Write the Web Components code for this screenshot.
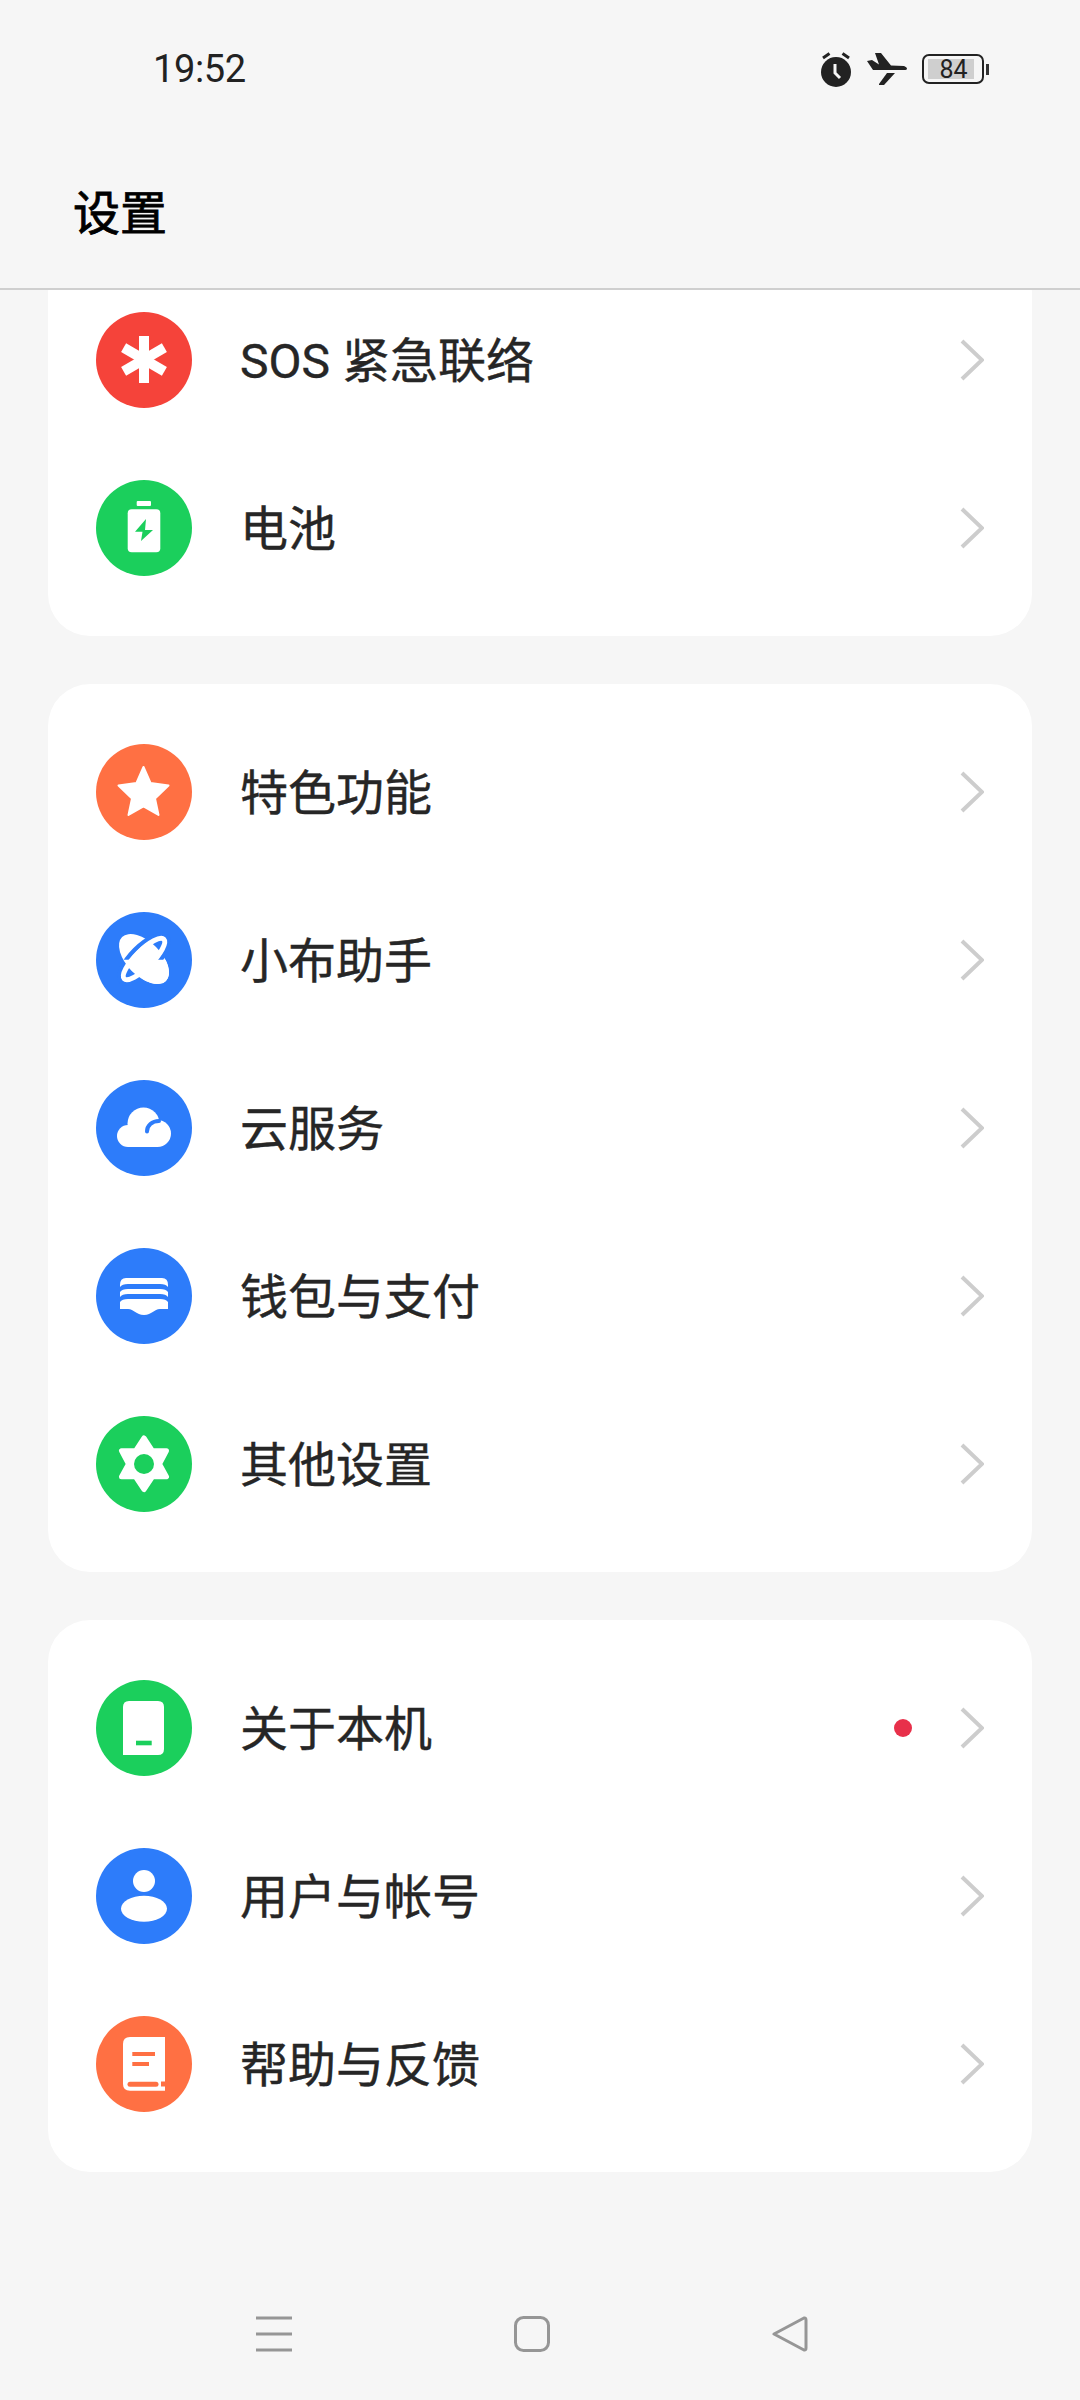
<!DOCTYPE html>
<html lang="zh">
<head>
<meta charset="utf-8">
<title>设置</title>
<style>
  html, body { margin: 0; padding: 0; background: #f6f6f6; }
  svg { display: block; }
</style>
</head>
<body>
<settings-app>
  <status-bar time="19:52" battery="84"></status-bar>
  <title-bar>设置</title-bar>
  <settings-list>
    <settings-group>
      <settings-row label="SOS 紧急联络" color="#f5433a">
        <svg slot="icon" viewBox="0 0 96 96" width="96" height="96">
          <g stroke="#fff" stroke-width="10" fill="none">
            <path d="M48 24V71"/>
            <path d="M27.6 35.7L68.4 59.3"/>
            <path d="M68.4 35.7L27.6 59.3"/>
          </g>
        </svg>
      </settings-row>
      <settings-row label="电池" color="#1bcf5c">
        <svg slot="icon" viewBox="0 0 96 96" width="96" height="96">
          <rect x="40.7" y="21" width="14.3" height="5" rx="1" fill="#fff"/>
          <rect x="31.7" y="29.3" width="32.6" height="43" rx="4" fill="#fff"/>
          <path d="M50 39L39 51.7H46.5L45 61L57 50H49Z" fill="#1bcf5c"/>
        </svg>
      </settings-row>
    </settings-group>
    <settings-group>
      <settings-row label="特色功能" color="#ff7043">
        <svg slot="icon" viewBox="0 0 96 96" width="96" height="96">
          <path d="M47.5 23L54.5 39L72.5 41.5L59 54.5L62.5 71L47.5 62.5L32.5 71L36 54.5L22.5 41.5L40.5 39Z" fill="#fff" stroke="#fff" stroke-width="2" stroke-linejoin="round"/>
        </svg>
      </settings-row>
      <settings-row label="小布助手" color="#2d7cfa">
        <svg slot="icon" viewBox="0 0 96 96" width="96" height="96">
          <defs>
            <clipPath id="xiaobu-lower"><path d="M10 86L86 10V96H10Z"/></clipPath>
          </defs>
          <ellipse cx="48" cy="47" rx="31" ry="17" transform="rotate(45 48 47)" fill="#fff"/>
          <ellipse cx="48" cy="47" rx="32" ry="13" transform="rotate(-45 48 47)" fill="none" stroke="#2d7cfa" stroke-width="4.5"/>
          <ellipse cx="48" cy="47" rx="31" ry="17" transform="rotate(45 48 47)" fill="#fff" clip-path="url(#xiaobu-lower)"/>
          <ellipse cx="48" cy="47" rx="28" ry="8.5" transform="rotate(-45 48 47)" fill="none" stroke="#fff" stroke-width="5"/>
        </svg>
      </settings-row>
      <settings-row label="云服务" color="#2d7cfa">
        <svg slot="icon" viewBox="0 0 96 96" width="96" height="96">
          <g fill="#fff">
            <circle cx="32" cy="56" r="11"/>
            <circle cx="47.5" cy="43.5" r="16"/>
            <circle cx="61.5" cy="53.5" r="13.5"/>
            <rect x="32" y="50" width="30" height="17"/>
          </g>
          <path d="M51 51.5C51 45.5 56 41 63 41" fill="none" stroke="#2d7cfa" stroke-width="4" stroke-linecap="round"/>
        </svg>
      </settings-row>
      <settings-row label="钱包与支付" color="#2d7cfa">
        <svg slot="icon" viewBox="0 0 96 96" width="96" height="96">
          <g fill="#fff">
            <path d="M24 37Q24 30 30 30H66Q72 30 72 37V39Q70 36 64 36H32Q26 36 24 39Z"/>
            <path d="M24 44Q26 41 32 41H64Q70 41 72 44V49Q70 46 64 46H32Q26 46 24 49Z"/>
            <path d="M24 54Q26 51 32 51H64Q70 51 72 54V61H64C58 61 56 67 48 67C40 67 38 61 32 61H24Z"/>
          </g>
        </svg>
      </settings-row>
      <settings-row label="其他设置" color="#1bcf5c">
        <svg slot="icon" viewBox="0 0 96 96" width="96" height="96">
          <path d="M48 22L56.5 34.8H70.5L63.5 48L70.5 60.8H56.5L48 73.5L39.5 60.8H25.5L32.5 48L25.5 34.8H39.5Z" fill="#fff" stroke="#fff" stroke-width="5" stroke-linejoin="round"/>
          <circle cx="48" cy="48" r="10" fill="#1bcf5c"/>
        </svg>
      </settings-row>
    </settings-group>
    <settings-group>
      <settings-row label="关于本机" color="#1bcf5c" dot>
        <svg slot="icon" viewBox="0 0 96 96" width="96" height="96">
          <path d="M33 21H62Q68 21 68 27V69Q68 75 62 75H27V27Q27 21 33 21Z" fill="#fff"/>
          <rect x="40" y="60.7" width="15.7" height="4.6" fill="#1bcf5c"/>
        </svg>
      </settings-row>
      <settings-row label="用户与帐号" color="#2d7cfa">
        <svg slot="icon" viewBox="0 0 96 96" width="96" height="96">
          <circle cx="48" cy="33" r="11" fill="#fff"/>
          <ellipse cx="48" cy="60.7" rx="23" ry="13" fill="#fff"/>
        </svg>
      </settings-row>
      <settings-row label="帮助与反馈" color="#ff7043">
        <svg slot="icon" viewBox="0 0 96 96" width="96" height="96">
          <path d="M34 21H69V65.5H65V70.5H69V74.7H34Q27 74.7 27 68V28Q27 21 34 21Z" fill="#fff"/>
          <g stroke="#ff7043" fill="none">
            <path d="M36.3 38H59" stroke-width="4"/>
            <path d="M36.3 48H53" stroke-width="4"/>
            <path d="M34 68.2H60" stroke-width="5" stroke-linecap="round"/>
          </g>
        </svg>
      </settings-row>
    </settings-group>
  </settings-list>
  <nav-bar></nav-bar>
</settings-app>

<script>
// Page shell
class SettingsApp extends HTMLElement {
  constructor() {
    super();
    this.attachShadow({ mode: 'open' });
    this.shadowRoot.innerHTML = `
      <style>
        :host {
          display: flex;
          flex-direction: column;
          width: 1080px;
          height: 2400px;
          overflow: hidden;
          background: #f6f6f6;
          font-family: Roboto, "Noto Sans CJK SC", sans-serif;
        }
      </style>
      <slot></slot>`;
  }
}

// Status bar
class StatusBar extends HTMLElement {
  constructor() {
    super();
    this.attachShadow({ mode: 'open' });
    this.shadowRoot.innerHTML = `
      <style>
        :host {
          display: flex;
          align-items: center;
          justify-content: space-between;
          flex: none;
          height: 138px;
          padding: 0 91px 0 153px;
          box-sizing: border-box;
          color: #222;
        }
        .time { font-size: 38px; line-height: 1; letter-spacing: -.4px; }
        .icons { display: flex; align-items: center; }
        .alarm { margin-right: 15px; }
        .plane { margin-right: 15px; }
        .battery {
          position: relative;
          width: 62px;
          height: 30px;
          box-sizing: border-box;
          border: 2.5px solid #222;
          border-radius: 7px;
          padding: 3px;
          margin-right: 2px;
        }
        .level {
          display: flex;
          align-items: center;
          justify-content: center;
          width: 46px;
          height: 100%;
          padding-left: 5px;
          box-sizing: border-box;
          background: #cfcfcf;
          font-size: 25px;
          line-height: 1;
          margin-left: 1px;
        }
        .tip { width: 3px; height: 11px; background: #333; }
      </style>
      <span class="time"></span>
      <div class="icons">
        <svg class="alarm" width="32" height="36" viewBox="0 0 32 36">
          <circle cx="16" cy="21" r="15" fill="#222"/>
          <path d="M3 7L9.5 2.5M29 7L22.5 2.5" stroke="#222" stroke-width="3" fill="none"/>
          <path d="M15 13V22L20 27" stroke="#f6f6f6" stroke-width="3" fill="none"/>
        </svg>
        <svg class="plane" width="40" height="32" viewBox="0 0 40 32">
          <path d="M0 8L5 7L12 11.5L8 0H14L24 12.5L37 13Q40 14 40 15.5Q40 17 37 17H6Z" fill="#222"/>
          <path d="M12 31L20 20H28L17 32H12Z" fill="#222"/>
        </svg>
        <div class="battery"><div class="level"></div></div>
        <div class="tip"></div>
      </div>`;
    this.shadowRoot.querySelector('.time').innerText = this.getAttribute('time');
    this.shadowRoot.querySelector('.level').innerText = this.getAttribute('battery');
  }
}

// Title bar
class TitleBar extends HTMLElement {
  constructor() {
    super();
    this.attachShadow({ mode: 'open' });
    this.shadowRoot.innerHTML = `
      <style>
        :host {
          display: flex;
          align-items: center;
          flex: none;
          height: 152px;
          padding: 0 0 8px 73px;
          box-sizing: border-box;
          border-bottom: 2px solid #cfcfcf;
          font-size: 47px;
          font-weight: 400;
          -webkit-text-stroke: .8px #000;
          color: #000;
        }
      </style>
      <slot></slot>`;
  }
}

// Scrolled list, the first card is cut off under the title bar
class SettingsList extends HTMLElement {
  constructor() {
    super();
    this.attachShadow({ mode: 'open' });
    this.shadowRoot.innerHTML = `
      <style>
        :host { display: block; flex: 1; min-height: 0; overflow: hidden; }
        .inner {
          display: flex;
          flex-direction: column;
          gap: 48px;
          margin: -38px 48px 0;
        }
      </style>
      <div class="inner"><slot></slot></div>`;
  }
}

class SettingsGroup extends HTMLElement {
  constructor() {
    super();
    this.attachShadow({ mode: 'open' });
    this.shadowRoot.innerHTML = `
      <style>
        :host {
          display: block;
          padding: 24px 0;
          background: #fff;
          border-radius: 42px;
        }
      </style>
      <slot></slot>`;
  }
}

const rowTemplate = document.createElement('template');
rowTemplate.innerHTML = `
  <style>
    :host {
      display: flex;
      align-items: center;
      height: 168px;
      padding: 0 48px;
      color: #262626;
      font-size: 48px;
    }
    .badge {
      display: flex;
      flex: none;
      width: 96px;
      height: 96px;
      border-radius: 50%;
      margin-right: 48px;
    }
    .label { flex: 1; white-space: nowrap; padding-bottom: 6px; -webkit-text-stroke: .4px #262626; }
    .dot {
      display: none;
      width: 18px;
      height: 18px;
      border-radius: 50%;
      background: #e8304a;
      margin-right: 48px;
    }
    :host([dot]) .dot { display: block; }
  </style>
  <div class="badge"><slot name="icon"></slot></div>
  <span class="label"></span>
  <span class="dot"></span>
  <svg width="24" height="42" viewBox="0 0 24 42">
    <path d="M2 2L22 21L2 40" fill="none" stroke="#cdcdcd" stroke-width="4"/>
  </svg>`;

class SettingsRow extends HTMLElement {
  constructor() {
    super();
    this.attachShadow({ mode: 'open' });
    this.shadowRoot.appendChild(rowTemplate.content.cloneNode(true));
    this.shadowRoot.querySelector('.label').innerText = this.getAttribute('label');
    this.shadowRoot.querySelector('.badge').style.background = this.getAttribute('color');
  }
}

class NavBar extends HTMLElement {
  constructor() {
    super();
    this.attachShadow({ mode: 'open' });
    this.shadowRoot.innerHTML = `
      <style>
        :host {
          display: flex;
          align-items: center;
          justify-content: space-between;
          flex: none;
          height: 132px;
          padding: 0 272px 0 256px;
          box-sizing: border-box;
        }
      </style>
      <svg width="36" height="36" viewBox="0 0 36 36">
        <path d="M0 2H36M0 18H36M0 34H36" stroke="#969696" stroke-width="3" fill="none"/>
      </svg>
      <svg width="36" height="36" viewBox="0 0 36 36">
        <rect x="1.5" y="1.5" width="33" height="33" rx="8" stroke="#969696" stroke-width="3" fill="none"/>
      </svg>
      <svg width="36" height="36" viewBox="0 0 36 36">
        <path d="M2 18L32 2Q34 1.5 34 4V32Q34 34.5 32 34Z" stroke="#969696" stroke-width="3" stroke-linejoin="round" fill="none"/>
      </svg>`;
  }
}

customElements.define('settings-app', SettingsApp);
customElements.define('status-bar', StatusBar);
customElements.define('title-bar', TitleBar);
customElements.define('settings-list', SettingsList);
customElements.define('settings-group', SettingsGroup);
customElements.define('settings-row', SettingsRow);
customElements.define('nav-bar', NavBar);
</script>
</body>
</html>
